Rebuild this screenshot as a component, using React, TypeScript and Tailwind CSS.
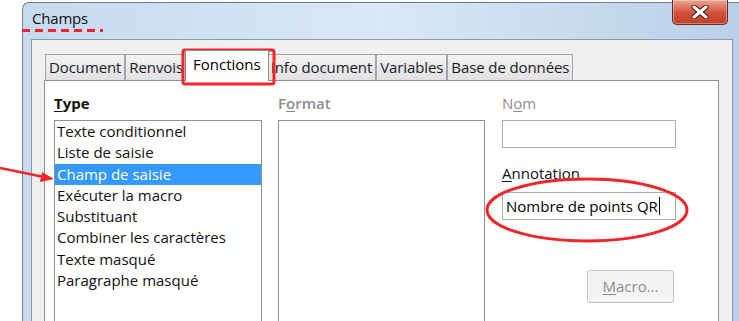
import React from 'react';

/* Boîte de dialogue "Champs" (LibreOffice, style Windows 7) avec annotations rouges */

const tabs = ['Document', 'Renvois', 'Fonctions', 'Info document', 'Variables', 'Base de données'];

const types = [
  'Texte conditionnel',
  'Liste de saisie',
  'Champ de saisie',
  'Exécuter la macro',
  'Substituant',
  'Combiner les caractères',
  'Texte masqué',
  'Paragraphe masqué',
];

function Tab({ label, active }: { label: string; active: boolean }) {
  if (active) {
    return (
      <div className="relative z-10 -mx-[2px] mb-[-1px] flex h-[31px] items-center border border-b-0 border-[#8c8e94] bg-white px-[7px] pb-[3px] text-[#000]">
        {label}
      </div>
    );
  }
  return (
    <div className="flex h-[26px] items-center border border-b-0 border-[#a3a5ab] bg-gradient-to-b from-[#f3f3f3] to-[#e1e1e1] px-[3px] tracking-[-0.1px] text-[#1a1a2a]">
      {label}
    </div>
  );
}

function CloseButton() {
  return (
    <div className="absolute left-[672px] top-0 flex h-[25px] w-[56px] items-center justify-center rounded-b-[5px] border border-t-0 border-[#6d2a22] bg-gradient-to-b from-[#e8a595] via-[#d2543d] to-[#c33e27] shadow-[inset_0_0_0_1px_rgba(255,255,255,0.35)]">
      <svg width="18" height="14" viewBox="0 0 18 14">
        <path d="M3 2 L15 12 M15 2 L3 12" stroke="#4a1a14" strokeWidth="5" strokeLinecap="round" />
        <path d="M3 2 L15 12 M15 2 L3 12" stroke="#ffffff" strokeWidth="3" strokeLinecap="round" />
      </svg>
    </div>
  );
}

function Annotations() {
  return (
    <svg className="pointer-events-none absolute left-0 top-0" width="739" height="321" viewBox="0 0 739 321">
      {/* pointillés sous le titre */}
      <line x1="22" y1="30.5" x2="103" y2="30.5" stroke="#f2252a" strokeWidth="3" strokeDasharray="8 5" />
      {/* cadre autour de l'onglet Fonctions */}
      <rect x="183" y="50" width="91" height="34" rx="2" fill="none" stroke="#f2252a" strokeWidth="3" />
      {/* flèche vers Champ de saisie */}
      <line x1="0" y1="168" x2="44" y2="177" stroke="#f2252a" strokeWidth="2.5" />
      <path d="M54 179 L42 172 L40 182 Z" fill="#f2252a" />
      {/* ellipse autour de l'annotation */}
      <ellipse cx="587" cy="210" rx="100" ry="31" fill="none" stroke="#f2252a" strokeWidth="3" />
    </svg>
  );
}

export default function App() {
  return (
    <div className="relative h-[321px] w-[739px] overflow-hidden bg-white font-['Open_Sans','Noto_Sans',sans-serif] text-[15px] text-[#000]">
      {/* cadre de fenêtre */}
      <div className="ml-[22px] mt-[2px] flex h-[330px] flex-col rounded-tl-[7px] border-l border-t border-[#6e7f92] bg-gradient-to-r from-[#c6daf0] via-[#d9e8f7] to-[#b9d0e8] pl-[8px]">
        <div className="flex h-[36px] items-start pl-[1px] pt-[4px] text-[15px] tracking-[-0.2px] text-[#111]">Champs</div>
        <div className="flex w-[702px] flex-1 flex-col border border-[#8a99ab] bg-[#f0f0f0] pl-[12px] pt-[10px]">
          <div className="flex items-end pl-[1px]">
            {tabs.map((t) => (
              <Tab key={t} label={t} active={t === 'Fonctions'} />
            ))}
          </div>
          <div className="flex w-[675px] flex-1 gap-[16px] border border-[#8c8e94] bg-white pl-[9px] pt-[11px]">
            {/* Type */}
            <div className="flex w-[208px] flex-col">
              <div className="h-[28px] font-bold text-[#111]">
                <span className="underline underline-offset-2">T</span>ype
              </div>
              <div className="flex-1 border border-[#8e9095] bg-white">
                {types.map((t) => (
                  <div
                    key={t}
                    className={
                      t === 'Champ de saisie'
                        ? 'h-[21.3px] bg-[#3399ff] pl-[2px] leading-[21.3px] text-white'
                        : 'h-[21.3px] pl-[2px] leading-[21.3px] text-[#111]'
                    }
                  >
                    {t}
                  </div>
                ))}
              </div>
            </div>
            {/* Format */}
            <div className="flex w-[207px] flex-col">
              <div className="h-[28px] font-semibold text-[#8d8d8d]">
                F<span className="underline underline-offset-2">o</span>rmat
              </div>
              <div className="flex-1 border border-[#8e9095] bg-white" />
            </div>
            {/* Nom / Annotation */}
            <div className="ml-px flex w-[174px] flex-col">
              <div className="h-[28px] text-[#8d8d8d]">
                N<span className="underline underline-offset-2">o</span>m
              </div>
              <div className="h-[28px] border border-[#abadb3] bg-white" />
              <div className="mt-[14px] h-[30px] text-[#111]">
                <span className="underline underline-offset-2">A</span>nnotation
              </div>
              <div className="flex h-[28px] items-center border border-[#abadb3] bg-white pl-[3px] text-[#000]">
                Nombre de points QR
                <span className="ml-px inline-block h-[18px] w-px bg-black" />
              </div>
              <div className="mt-[50px] flex justify-end pr-[2px]">
                <div className="flex h-[33px] w-[87px] items-center justify-center rounded-[3px] border border-[#c4c4c4] bg-[#f4f4f4] text-[#8d8d8d]">
                  <span className="underline underline-offset-2">M</span>acro...
                </div>
              </div>
            </div>
          </div>
        </div>
      </div>
      <CloseButton />
      <Annotations />
    </div>
  );
}
